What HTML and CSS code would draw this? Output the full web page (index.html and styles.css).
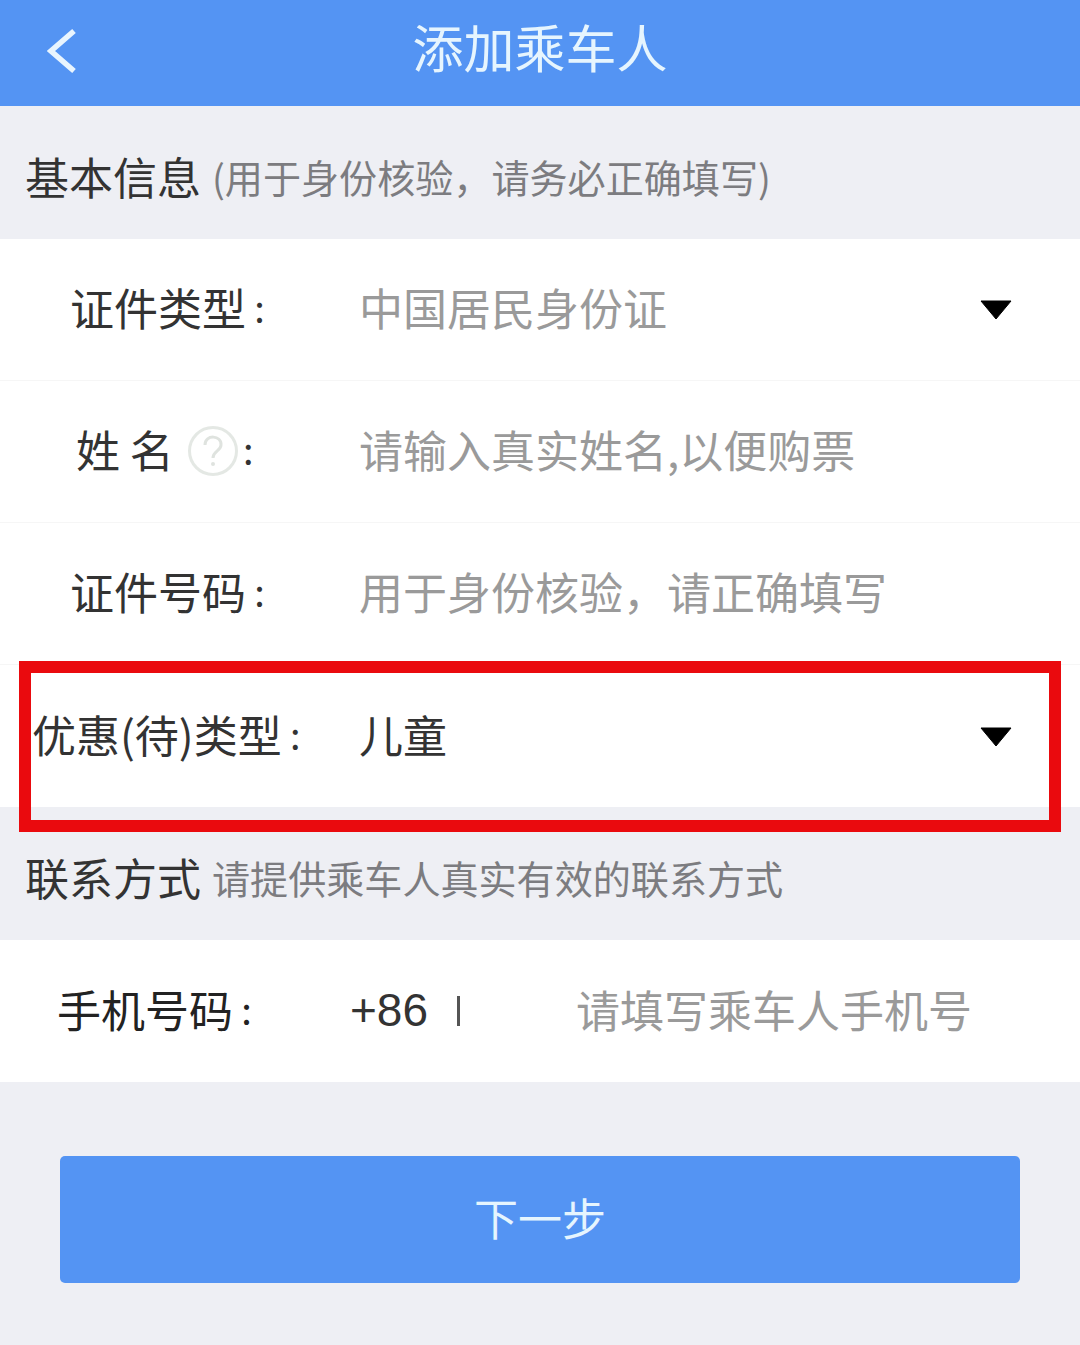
FILE: index.html
```html
<!DOCTYPE html>
<html lang="zh-CN">
<head>
<meta charset="utf-8">
<title>添加乘车人</title>
<link rel="stylesheet" href="styles.css">
</head>
<body>
<main class="page">
  <header class="topbar">
    <svg class="back" viewBox="0 0 30 46" width="30" height="46" aria-hidden="true"><path d="M27 3 L4 23 L27 43" fill="none" stroke="#e9f5fe" stroke-width="5.5"/></svg>
    <h1 class="title">添加乘车人</h1>
  </header>

  <section class="section-head">
    <h2 class="section-title">基本信息</h2>
    <p class="section-note note-basic">(用于身份核验，请务必正确填写)</p>
  </section>

  <div class="row">
    <span class="label label-a">证件类型<i class="colon">:</i></span>
    <span class="value muted">中国居民身份证</span>
    <svg class="caret" viewBox="0 0 32 20" width="32" height="20" aria-hidden="true"><path d="M1 1 H31 L16 19 Z" fill="#000" stroke="#000" stroke-width="1" stroke-linejoin="round"/></svg>
  </div>
  <div class="row">
    <span class="label label-b"><span>姓 名</span><svg class="help" viewBox="0 0 52 52" width="52" height="52" aria-hidden="true"><circle cx="26" cy="26" r="23.5" fill="none" stroke="#e4e8e4" stroke-width="3"/><path d="M18 20 C18 9 35 10 34 20 C34 26 26 26 26 33" fill="none" stroke="#dfe3df" stroke-width="3"/><circle cx="26" cy="39" r="2" fill="#dfe3df"/></svg><i class="colon colon-tight">:</i></span>
    <span class="value muted">请输入真实姓名,以便购票</span>
  </div>
  <div class="row">
    <span class="label label-a">证件号码<i class="colon">:</i></span>
    <span class="value muted">用于身份核验，请正确填写</span>
  </div>
  <div class="row row-last">
    <span class="label label-c">优惠(待)类型<i class="colon">:</i></span>
    <span class="value">儿童</span>
    <svg class="caret caret-low" viewBox="0 0 32 20" width="32" height="20" aria-hidden="true"><path d="M1 1 H31 L16 19 Z" fill="#000" stroke="#000" stroke-width="1" stroke-linejoin="round"/></svg>
  </div>

  <section class="section-head">
    <h2 class="section-title">联系方式</h2>
    <p class="section-note">请提供乘车人真实有效的联系方式</p>
  </section>

  <div class="row row-last">
    <span class="label label-d">手机号码<i class="colon">:</i></span>
    <span class="code">+86</span>
    <span class="code-bar"></span>
    <span class="phone muted">请填写乘车人手机号</span>
  </div>

  <div class="actions">
    <button class="next" type="button">下一步</button>
  </div>

  <div class="highlight" aria-hidden="true"></div>
</main>
</body>
</html>
```
FILE: styles.css
```css
* { box-sizing: border-box; }
html, body { margin: 0; padding: 0; }
body {
  width: 1080px;
  height: 1345px;
  overflow: hidden;
  background: #eeeff4;
  font-family: "Noto Sans CJK SC", "Noto Sans", sans-serif;
  color: #333;
}
.page { position: relative; width: 1080px; height: 1345px; }

.topbar {
  height: 106px;
  padding-bottom: 14px;
  background: #5494f3;
  display: flex;
  align-items: center;
  justify-content: center;
  position: relative;
}
.back { position: absolute; left: 47px; top: 28px; }
.title {
  margin: 0;
  font-size: 51px;
  font-weight: 400;
  line-height: 1;
  color: #e6f5fe;
}

.section-head {
  height: 133px;
  padding: 6px 0 0 25px;
  display: flex;
  align-items: center;
  background: #eeeff4;
}
.section-title {
  margin: 0;
  font-size: 44px;
  font-weight: 400;
  line-height: 1;
  color: #333;
}
.section-note {
  margin: 3px 0 0 11px;
  font-size: 38.1px;
  line-height: 1;
  color: #7c7c80;
  white-space: nowrap;
}

.row {
  height: 142px;
  padding-bottom: 5px;
  background: #fff;
  border-bottom: 1px solid #f6f6f6;
  display: flex;
  align-items: center;
  font-size: 44px;
  line-height: 1;
  position: relative;
}
.row-last { border-bottom: 0; }

.label {
  width: 359px;
  flex: none;
  display: flex;
  align-items: center;
  white-space: pre;
  color: #333;
}
.label-a { padding-left: 70px; }
.label-b { padding-left: 76px; }
.label-c { padding-left: 32px; }
.label-d { padding-left: 57px; color: #222; }
.colon { font-style: normal; font-size: 38px; width: 17px; margin-left: 5px; text-align: center; }
.colon-tight { margin-left: 2px; width: 15px; }
.help { margin-left: 13px; margin-top: 4px; }

.value { color: #333; white-space: nowrap; }
.muted { color: #9a9a9a; }

.caret { position: absolute; left: 980px; top: 61px; }
.caret-low { top: 62px; }

.code {
  margin-left: -9px;
  width: 107px;
  flex: none;
  font-family: "Liberation Sans", sans-serif;
  font-size: 46px;
  padding-top: 3px;
}
.code-bar { width: 3px; height: 30px; background: #555; flex: none; margin-top: 4px; }
.phone { margin-left: 116px; white-space: nowrap; }

.actions { padding: 74px 60px 0; }
.next {
  display: block;
  width: 960px;
  height: 127px;
  border: 0;
  border-radius: 5px;
  background: #5494f3;
  color: #e6f5fe;
  font-family: inherit;
  font-size: 44px;
  line-height: 1;
  padding: 0 0 6px;
}

.highlight {
  position: absolute;
  left: 19px;
  top: 661px;
  width: 1042px;
  height: 171px;
  border: 12px solid #ea0a0e;
  pointer-events: none;
}
```
